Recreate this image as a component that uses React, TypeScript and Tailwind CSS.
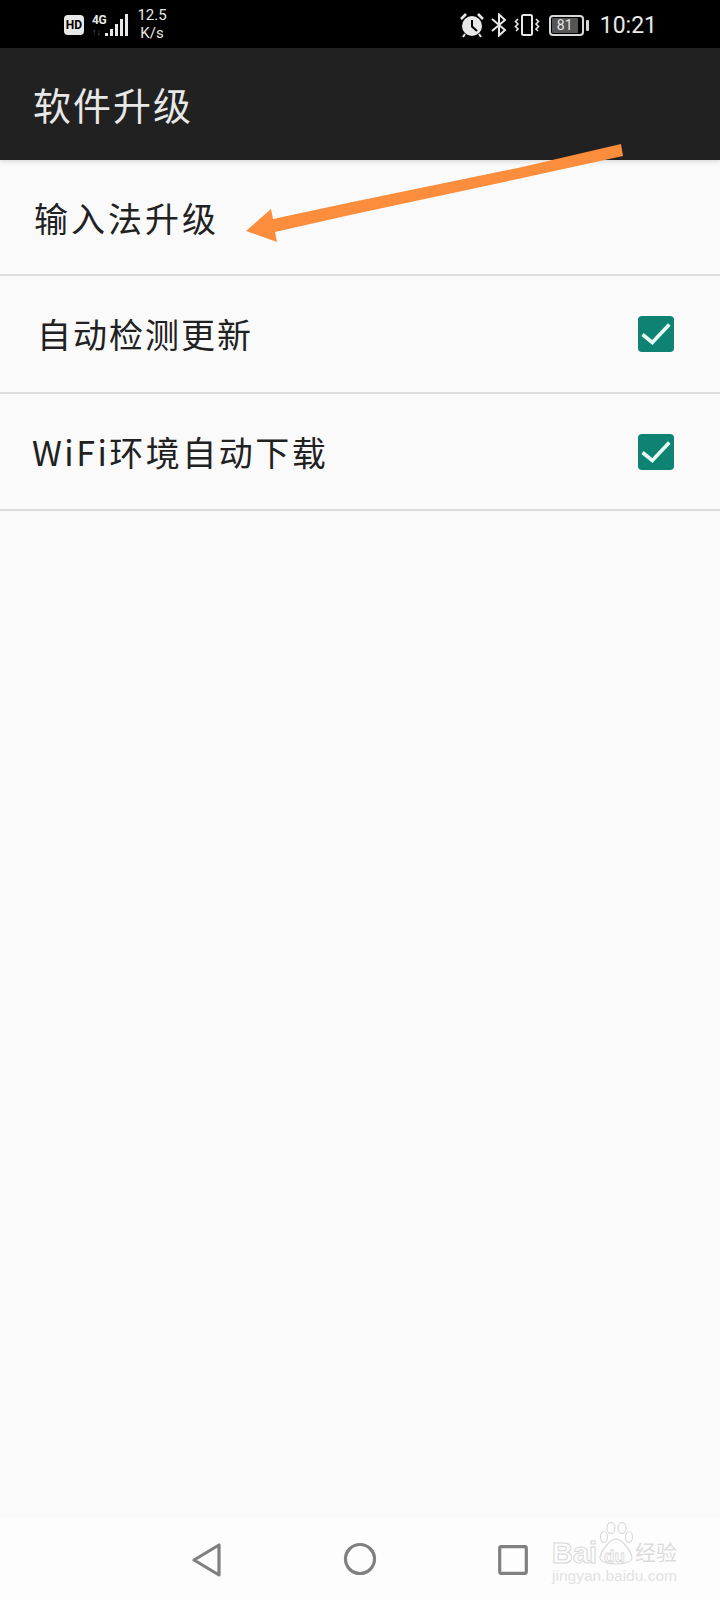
import React from "react";

const cjk = "font-['Noto_Sans_CJK_SC','Noto_Sans_CJK_JP',sans-serif]";

function Check() {
  return (
    <div className="w-9 h-9 rounded-[4px] bg-[#0f8373] flex items-center justify-center">
      <svg width="36" height="36" viewBox="0 0 36 36" fill="none">
        <path d="M4.5 18.5 L14.3 26.5 L31.3 8.5" stroke="#e6fbf6" strokeWidth="3.6" />
      </svg>
    </div>
  );
}

function Row(props: { title: string; checked?: boolean; className: string; textClass: string }) {
  return (
    <div className={`flex items-center justify-between border-b-2 border-[#dcdcdc] pr-[46px] ${props.className}`}>
      <span className={`text-[34px] leading-none text-[#212121] ${cjk} ${props.textClass}`}>{props.title}</span>
      {props.checked && <Check />}
    </div>
  );
}

function StatusBar() {
  return (
    <div className="h-12 bg-black flex items-center text-[#e8e8e8] font-['Roboto',sans-serif]">
      <div className="ml-[64px] mt-[2px] w-[20px] h-[20px] rounded-[4px] bg-[#e8e8e8] text-black text-[12px] font-bold flex items-center justify-center leading-none">
        HD
      </div>
      <div className="ml-2 flex flex-col w-[13px] leading-none mt-[2px]">
        <span className="text-[12px] font-bold tracking-[-0.5px]">4G</span>
        <span className="text-[9px] mt-[2px] text-[#666]">↑↓</span>
      </div>
      <div className="flex items-end gap-[2px] h-[22px] mt-[1px]">
        <i className="w-[3px] h-[3px] bg-[#e8e8e8]" />
        <i className="w-[3px] h-[7px] bg-[#e8e8e8]" />
        <i className="w-[3px] h-[12px] bg-[#e8e8e8]" />
        <i className="w-[3px] h-[17px] bg-[#e8e8e8]" />
        <i className="w-[3px] h-[22px] bg-[#e8e8e8]" />
      </div>
      <div className="ml-[8px] w-[32px] text-[15px] leading-[18px] text-center">
        12.5
        <br />
        K/s
      </div>
      <div className="ml-auto mr-[63px] mt-[2px] flex items-center">
        <svg width="26" height="26" viewBox="0 0 26 26" className="mr-[6px]">
          <circle cx="13" cy="14" r="10" fill="#e8e8e8" />
          <path d="M13 8 V14.5 L18 19" stroke="#000" strokeWidth="2" fill="none" />
          <path d="M2 7 L7 2 M24 7 L19 2" stroke="#e8e8e8" strokeWidth="2.6" />
          <path d="M6 22 L4 25 M20 22 L22 25" stroke="#e8e8e8" strokeWidth="2" />
        </svg>
        <svg width="16" height="24" viewBox="0 0 16 24" fill="none" stroke="#e8e8e8" strokeWidth="2" className="mr-[7px]">
          <path d="M1 6 L14 17 L8 22.5 V1.5 L14 7 L1 18" />
        </svg>
        <svg width="26" height="22" viewBox="0 0 26 22" fill="none" stroke="#e8e8e8" strokeWidth="1.6" className="mr-[9px]">
          <rect x="8" y="1" width="10" height="20" rx="1.5" strokeWidth="2" />
          <path d="M4 5 L1.5 7.5 L4 10 L1.5 12.5 L4 15 L2 17" />
          <path d="M22 5 L24.5 7.5 L22 10 L24.5 12.5 L22 15 L24 17" />
        </svg>
        <div className="w-[35px] h-[21px] rounded-[4px] border-2 border-[#d8d8d8] p-[1px] flex">
          <div className="w-[26px] h-full rounded-[1px] bg-[#555] text-[14px] leading-[15px] text-center text-[#e8e8e8]">81</div>
        </div>
        <div className="ml-[2px] w-[3px] h-[11px] rounded-[1px] bg-[#d8d8d8]" />
        <span className="ml-[11px] text-[23px] leading-none">10:21</span>
      </div>
    </div>
  );
}

function Watermark() {
  return (
    <div className="absolute left-[552px] top-0 w-[130px] h-[72px]">
      <svg width="36" height="44" viewBox="0 0 36 44" fill="none" stroke="#dadada" strokeWidth="1.2" className="absolute left-[46px] top-[4px]">
        <ellipse cx="6" cy="15" rx="3.5" ry="5.5" />
        <ellipse cx="13" cy="6" rx="4" ry="5.5" />
        <ellipse cx="24" cy="6" rx="4" ry="5.5" />
        <ellipse cx="31" cy="15" rx="3.5" ry="5.5" />
        <path d="M18 17 C12 17 2 30 2 36 C3 44 33 44 34 36 C34 30 24 17 18 17 Z" />
      </svg>
      <div className="absolute left-0 top-[21px] text-transparent [-webkit-text-stroke:1px_#d8d8d8] font-['Liberation_Sans',sans-serif] font-bold text-[29px] leading-none">
        Bai
      </div>
      <div className="absolute left-[52px] top-[30px] text-transparent [-webkit-text-stroke:0.8px_#d8d8d8] font-['Liberation_Sans',sans-serif] font-bold text-[17px] leading-none">
        du
      </div>
      <span className={`absolute left-[83px] top-[23px] text-[21px] leading-none text-[#dcdcdc] ${cjk}`}>经验</span>
      <span className="absolute left-0 top-[50px] text-[15.5px] leading-none text-[#e2e2e2] font-['Liberation_Sans',sans-serif]">jingyan.baidu.com</span>
    </div>
  );
}

function NavBar() {
  return (
    <div className="relative h-[82px] bg-[#fdfdfd] flex items-start pt-[22px]">
      <svg width="36" height="40" viewBox="0 0 36 40" fill="none" stroke="#808080" strokeWidth="3.2" strokeLinejoin="round" className="ml-[190px]">
        <path d="M29 5 V35 L4 20 Z" />
      </svg>
      <svg width="36" height="36" viewBox="0 0 36 36" fill="none" stroke="#808080" strokeWidth="3.2" className="ml-[116px] mt-[1px]">
        <circle cx="18" cy="18" r="14.5" />
      </svg>
      <svg width="30" height="30" viewBox="0 0 30 30" fill="none" stroke="#808080" strokeWidth="3.2" strokeLinejoin="round" className="ml-[120px] mt-[5px]">
        <rect x="1.7" y="1.7" width="26.6" height="26.6" rx="1.5" />
      </svg>
      <Watermark />
    </div>
  );
}

export default function App() {
  return (
    <div className="relative w-[720px] h-[1600px] bg-[#fafafa] flex flex-col overflow-hidden">
      <StatusBar />
      <div className="h-[112px] bg-[#212121] flex items-center pl-[33px] shadow-[0_2px_4px_rgba(0,0,0,0.12)] z-10">
        <span className={`text-[38px] leading-none tracking-[2px] text-[#e8e8e8] ${cjk}`}>软件升级</span>
      </div>
      <Row title="输入法升级" className="pl-[34px] h-[116px]" textClass="tracking-[3px] mt-[2px]" />
      <Row title="自动检测更新" className="pl-[37px] h-[118px]" textClass="tracking-[2px]" checked />
      <Row title="WiFi环境自动下载" className="pl-[32px] h-[117px]" textClass="tracking-[2.5px]" checked />
      <div className="flex-1" />
      <NavBar />
      {/* orange annotation arrow drawn over the screenshot */}
      <svg width="720" height="260" viewBox="0 0 720 260" className="absolute left-0 top-0 z-20">
        <path d="M246 231 L271 209 L273 219 L350 202.5 L520 167.5 L621 144 L623 156 L520 178.5 L350 215 L275 232 L277 242 Z" fill="#fb8d3d" />
      </svg>
    </div>
  );
}
